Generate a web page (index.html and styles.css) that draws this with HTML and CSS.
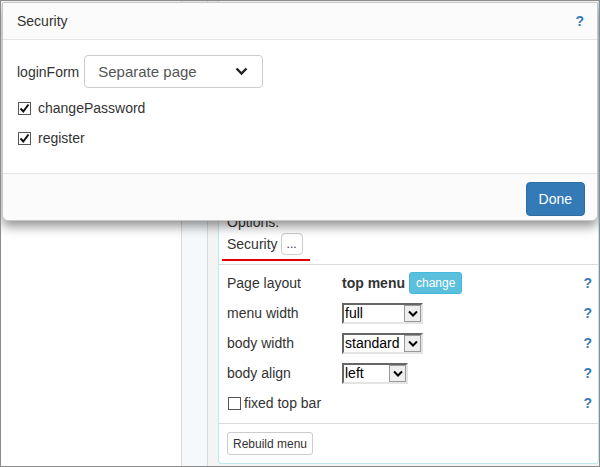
FILE: index.html
```html
<!DOCTYPE html>
<html>
<head>
    <title>Menu settings</title>
    <meta charset="UTF-8">
    <link rel="stylesheet" href="styles.css">
</head>
<body>
    <div class="frame">
        <div class="left-col"></div>
        <div class="strip-col"></div>
        <div class="gutter">
            <div class="panel">
                <div class="panel-top">
                    <div class="options-label">Options:</div>
                    <div class="options-line">
                        <span>Security</span>
                        <button class="dots-button">...</button>
                    </div>
                    <div class="red-mark"></div>
                </div>
                <div class="panel-rows">
                    <div class="row">
                        <span class="row-label">Page layout</span>
                        <span class="row-value"><b>top menu</b> <button class="info-button">change</button></span>
                        <span class="help">?</span>
                    </div>
                    <div class="row">
                        <span class="row-label">menu width</span>
                        <span class="row-value"><span class="old-select w80"><span class="sel-text">full</span><span class="sel-arrow"><svg width="10" height="7" viewBox="0 0 10 7"><path d="M1 1.5 L5 5.5 L9 1.5" fill="none" stroke="#000" stroke-width="2"/></svg></span></span></span>
                        <span class="help">?</span>
                    </div>
                    <div class="row">
                        <span class="row-label">body width</span>
                        <span class="row-value"><span class="old-select w80"><span class="sel-text">standard</span><span class="sel-arrow"><svg width="10" height="7" viewBox="0 0 10 7"><path d="M1 1.5 L5 5.5 L9 1.5" fill="none" stroke="#000" stroke-width="2"/></svg></span></span></span>
                        <span class="help">?</span>
                    </div>
                    <div class="row">
                        <span class="row-label">body align</span>
                        <span class="row-value"><span class="old-select w65"><span class="sel-text">left</span><span class="sel-arrow"><svg width="10" height="7" viewBox="0 0 10 7"><path d="M1 1.5 L5 5.5 L9 1.5" fill="none" stroke="#000" stroke-width="2"/></svg></span></span></span>
                        <span class="help">?</span>
                    </div>
                    <div class="row">
                        <label class="check-label"><span class="box"></span>fixed top bar</label>
                        <span class="help">?</span>
                    </div>
                </div>
                <div class="panel-foot">
                    <button class="plain-button">Rebuild menu</button>
                </div>
            </div>
        </div>

        <!-- Security dialog -->
        <div class="modal">
            <div class="modal-header">
                <span>Security</span>
                <span class="help">?</span>
            </div>
            <div class="modal-body">
                <div class="form-line">
                    <span>loginForm</span>
                    <span class="bs-select">Separate page
                        <svg width="13" height="9" viewBox="0 0 13 9"><path d="M1.5 1.5 L6.5 6.5 L11.5 1.5" fill="none" stroke="#222" stroke-width="2.4"/></svg>
                    </span>
                </div>
                <label class="check-label big"><span class="box checked"><svg width="11" height="11" viewBox="0 0 11 11"><path d="M1.5 5.5 L4.3 8.5 L9.5 1.5" fill="none" stroke="#111" stroke-width="2"/></svg></span>changePassword</label>
                <label class="check-label big"><span class="box checked"><svg width="11" height="11" viewBox="0 0 11 11"><path d="M1.5 5.5 L4.3 8.5 L9.5 1.5" fill="none" stroke="#111" stroke-width="2"/></svg></span>register</label>
            </div>
            <div class="modal-footer">
                <button class="primary-button">Done</button>
            </div>
        </div>
    </div>
</body>
</html>
```

FILE: styles.css
```css
html, body {
    margin: 0;
    padding: 0;
}

*, *:before, *:after {
    box-sizing: border-box;
}

body {
    font-family: "Liberation Sans", Arial, sans-serif;
    font-size: 14px;
    color: #333;
    background: #fff;
}

.frame {
    position: relative;
    width: 600px;
    height: 467px;
    border: 1px solid #8c8c8c;
    display: flex;
    overflow: hidden;
}

.left-col {
    width: 181px;
    border-right: 1px solid #dadada;
    background: #fff;
}

.strip-col {
    width: 26px;
    border-right: 1px solid #dadada;
    background: #f6f9fc;
}

.gutter {
    flex: 1;
    background: #f4f4f4;
    padding: 0 0 2px 10px;
    display: flex;
}

.panel {
    flex: 1;
    background: #fff;
    border: 1px solid #bce8f1;
    border-top: none;
    border-radius: 0 0 4px 4px;
    display: flex;
    flex-direction: column;
}

.panel-top {
    padding: 211px 8px 0 8px;
    border-bottom: 1px solid #ddd;
    height: 267px;
}

.options-label {
    line-height: 20px;
}

.options-line {
    display: flex;
    align-items: center;
    gap: 3px;
    height: 24px;
}

.red-mark {
    margin: 3px 0 0 -5px;
    width: 88px;
    height: 2px;
    background: #e50000;
}

.dots-button {
    font-family: inherit;
    font-size: 12px;
    color: #333;
    background: #fff;
    border: 1px solid #ccc;
    border-radius: 4px;
    width: 22px;
    height: 22px;
    padding: 0;
}

.panel-rows {
    padding: 3px 4px 5px 8px;
    border-bottom: 1px solid #ddd;
}

.row {
    display: flex;
    align-items: center;
    height: 30px;
}

.row-label {
    width: 115px;
}

.row-value {
    flex: 1;
    display: flex;
    align-items: center;
    gap: 4px;
}

.help {
    color: #337ab7;
    font-weight: bold;
    margin-left: auto;
    padding-right: 2px;
}

.info-button {
    font-family: inherit;
    font-size: 12px;
    color: #fff;
    background: #5bc0de;
    border: 1px solid #46b8da;
    border-radius: 3px;
    height: 22px;
    padding: 0 6px;
}

.old-select {
    display: inline-flex;
    align-items: center;
    height: 21px;
    border-top: 2px solid #666;
    border-left: 2px solid #666;
    border-right: 2px solid #e4e4e4;
    border-bottom: 2px solid #e4e4e4;
    background: #fff;
    color: #000;
    padding-left: 1px;
}

.old-select.w80 {
    width: 81px;
}

.old-select.w65 {
    width: 66px;
}

.sel-text {
    flex: 1;
    overflow: hidden;
    white-space: nowrap;
}

.sel-arrow {
    width: 17px;
    height: 17px;
    background: #eee;
    border: 1px solid #999;
    display: flex;
    align-items: center;
    justify-content: center;
}

.check-label {
    display: flex;
    align-items: center;
    gap: 3px;
}

.box {
    width: 13px;
    height: 13px;
    border: 1px solid #555;
    background: #fff;
    display: inline-flex;
    align-items: center;
    justify-content: center;
    margin-left: 1px;
}

.panel-foot {
    padding: 8px 8px;
}

.plain-button {
    font-family: inherit;
    font-size: 12px;
    color: #333;
    background: #fff;
    border: 1px solid #ccc;
    border-radius: 3px;
    height: 23px;
    padding: 0 5px;
}

/* dialog over the page */
.modal {
    position: absolute;
    top: 1px;
    left: 1px;
    width: 596px;
    background: #fff;
    border: 1px solid #c8c8c8;
    border-radius: 0 0 6px 6px;
    box-shadow: 0 5px 12px rgba(0, 0, 0, 0.45);
}

.modal-header {
    display: flex;
    align-items: center;
    height: 37px;
    padding: 0 11px 0 14px;
    background: #fbfbfb;
    border-bottom: 1px solid #e5e5e5;
}

.modal-body {
    padding: 15px 15px 20px 14px;
}

.form-line {
    display: flex;
    align-items: center;
    gap: 5px;
    margin-bottom: 5px;
}

.bs-select {
    display: inline-flex;
    align-items: center;
    justify-content: space-between;
    width: 179px;
    height: 33px;
    padding: 0 14px 0 13px;
    border: 1px solid #ccc;
    border-radius: 4px;
    color: #555;
    font-size: 15px;
}

.check-label.big {
    height: 30px;
    gap: 7px;
}

.modal-footer {
    height: 47px;
    background: #fbfbfb;
    border-top: 1px solid #e5e5e5;
    border-radius: 0 0 6px 6px;
    display: flex;
    align-items: center;
    justify-content: flex-end;
    padding: 3px 12px 0 12px;
}

.primary-button {
    font-family: inherit;
    font-size: 14px;
    color: #fff;
    background: #337ab7;
    border: 1px solid #2e6da4;
    border-radius: 4px;
    height: 34px;
    padding: 0 12px;
}
```
